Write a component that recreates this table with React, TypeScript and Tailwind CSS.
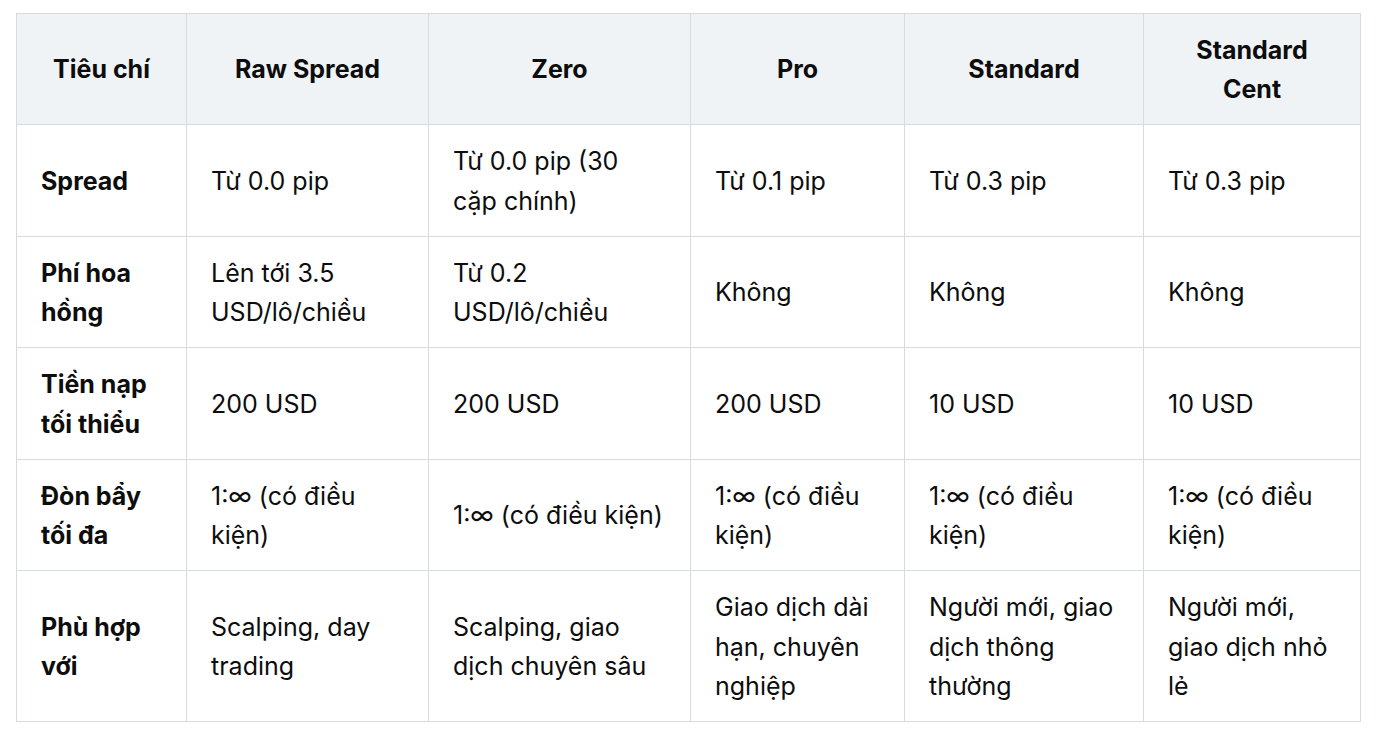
import * as React from 'react'

const HEADERS = ['Tiêu chí', 'Raw Spread', 'Zero', 'Pro', 'Standard', 'Standard Cent']
const WIDTHS = ['w-[170px]', 'w-[242px]', 'w-[262px]', 'w-[214px]', 'w-[239px]', 'w-[217px]']

const ROWS: string[][] = [
	['Spread', 'Từ 0.0 pip', 'Từ 0.0 pip (30 cặp chính)', 'Từ 0.1 pip', 'Từ 0.3 pip', 'Từ 0.3 pip'],
	['Phí hoa hồng', 'Lên tới 3.5 USD/lô/chiều', 'Từ 0.2 USD/lô/chiều', 'Không', 'Không', 'Không'],
	['Tiền nạp tối thiểu', '200 USD', '200 USD', '200 USD', '10 USD', '10 USD'],
	['Đòn bẩy tối đa', '1:∞ (có điều kiện)', '1:∞ (có điều kiện)', '1:∞ (có điều kiện)', '1:∞ (có điều kiện)', '1:∞ (có điều kiện)'],
	['Phù hợp với', 'Scalping, day trading', 'Scalping, giao dịch chuyên sâu', 'Giao dịch dài hạn, chuyên nghiệp', 'Người mới, giao dịch thông thường', 'Người mới, giao dịch nhỏ lẻ'],
]

const App: React.FC = () => {
	return (
		<div className="w-[1376px] h-[737px] bg-white pt-[13px] pl-4 font-['Inter','Noto_Sans',sans-serif] text-[#0d0d0d]">
			<table className="table-fixed border-collapse w-[1344px] text-[25px] leading-[39.5px]">
				<colgroup>
					{WIDTHS.map(w => (
						<col key={w} className={w} />
					))}
				</colgroup>
				<thead>
					<tr className="bg-[#f0f3f5]">
						{HEADERS.map(h => (
							<th
								key={h}
								className="border border-[#d6dbdf] px-6 pt-[16.5px] pb-[14.5px] font-bold text-center align-middle"
							>
								{h}
							</th>
						))}
					</tr>
				</thead>
				<tbody>
					{ROWS.map(row => (
						<tr key={row[0]}>
							{row.map((cell, i) => (
								<td
									key={i}
									className={
										i === 0
											? 'border border-[#d6dbdf] px-6 pt-[17px] pb-[14.5px] font-bold align-middle'
											: 'border border-[#d6dbdf] px-6 pt-[17px] pb-[14.5px] align-middle'
									}
								>
									{cell}
								</td>
							))}
						</tr>
					))}
				</tbody>
			</table>
		</div>
	)
}

export default App
